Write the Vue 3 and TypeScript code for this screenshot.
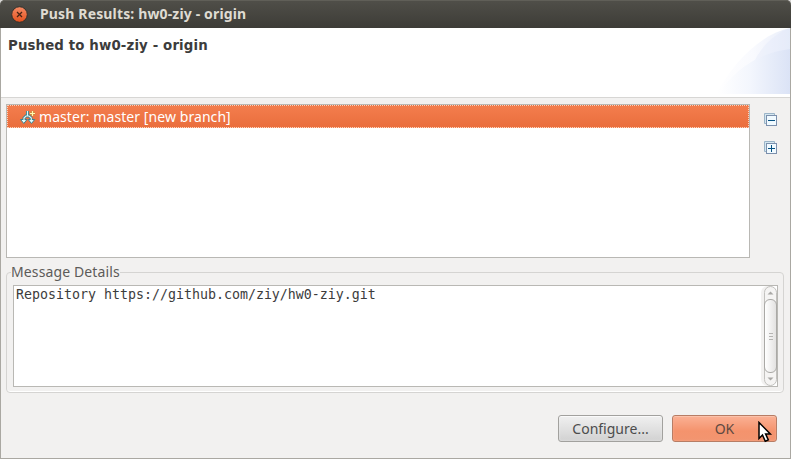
<script setup lang="ts">
import { ref } from 'vue'

interface PushRef {
  label: string
}

const project = 'hw0-ziy - origin'
const refs: PushRef[] = [{ label: 'master: master [new branch]' }]
const selected = ref(0)
const message = 'Repository https://github.com/ziy/hw0-ziy.git'
const toggles = ['collapse', 'expand']
</script>

<template>
  <div class="window">
    <header class="titlebar">
      <svg class="close" width="17" height="17" viewBox="0 0 17 17">
        <defs>
          <linearGradient id="closeFill" x1="0" y1="0" x2="0" y2="1">
            <stop offset="0" stop-color="#f58b65" />
            <stop offset="1" stop-color="#e4511d" />
          </linearGradient>
        </defs>
        <circle cx="8.5" cy="8.5" r="7.8" fill="url(#closeFill)" stroke="#32312c" />
        <path d="M6 6l5 5M11 6l-5 5" stroke="#492414" stroke-width="1.3" />
      </svg>
      <span class="title">Push Results: {{ project }}</span>
    </header>

    <div class="body">
      <section class="banner">
        <h1>Pushed to {{ project }}</h1>
        <svg class="swoosh" width="74" height="66" viewBox="0 0 74 66">
          <defs>
            <linearGradient id="outer" x1="0" y1="0" x2="1" y2="0">
              <stop offset="0" stop-color="#fff" />
              <stop offset="0.5" stop-color="#f9fafe" />
              <stop offset="1" stop-color="#e9eefa" />
            </linearGradient>
            <linearGradient id="inner" x1="0" y1="0" x2="1" y2="0">
              <stop offset="0" stop-color="#fff" />
              <stop offset="0.45" stop-color="#f3f6fd" />
              <stop offset="1" stop-color="#dbe3f6" />
            </linearGradient>
          </defs>
          <path d="M0 66C16 37 42 7 74 0V66Z" fill="url(#outer)" />
          <path d="M36 38C44 20 56 7 74 0V66H36Z" fill="#dde6f7" opacity=".3" />
          <path d="M2 66C20 40 43 25 74 21V66Z" fill="url(#inner)" />
        </svg>
      </section>

      <section class="results">
        <div class="list">
          <div v-for="(r, i) in refs" :key="r.label" class="row" :class="{ active: i === selected }" @click="selected = i">
            <svg class="branch" width="16" height="16" viewBox="0 0 16 16" fill="none">
              <path d="M7.5 1v5.500M4 10V8L6 6H9L11 8V10" stroke="#397f8e" stroke-width="3" />
              <path d="M.5 9.500H7L3.800 13.500ZM8.200 9.500H14.700L11.500 13.500Z" fill="#e5ffff" stroke="#397f8e" />
              <path d="M7.500 1v5.500M4 11V8L6 6H9L11.300 8V11" stroke="#dff8f6" stroke-width="1.200" />
              <path d="M12.500 1v5M10 3.500h5" stroke="#c08b35" stroke-width="2" />
              <path d="M12.500 1v5M10 3.500h5" stroke="#fff8b0" stroke-width="1.200" />
            </svg>
            <span class="row-label">{{ r.label }}</span>
          </div>
        </div>
        <div class="tools">
          <svg v-for="t in toggles" :key="t" width="13" height="13" viewBox="0 0 13 13">
            <path d="M.5 10.500V.5H10.500V3H3V10.500Z" fill="#d5e7ef" stroke="#9bb4c8" />
            <rect x="2.500" y="2.500" width="10" height="10" fill="#f1faff" stroke="#7c90ad" />
            <path d="M4 7.500h7" stroke="#075283" />
            <path v-if="t === 'expand'" d="M7.500 4v7" stroke="#075283" />
          </svg>
        </div>
      </section>

      <fieldset class="details">
        <legend><span>Message Details</span></legend>
        <div class="message">
          <pre>{{ message }}</pre>
          <div class="scrollbar">
            <div class="arrow"><svg width="7" height="4" viewBox="0 0 7 4"><path d="M.5 3.500L3.500 .5L6.500 3.500Z" fill="#a9a8a6" /></svg></div>
            <div class="thumb"><i></i><i></i><i></i></div>
            <div class="arrow"><svg width="7" height="4" viewBox="0 0 7 4"><path d="M.5 .5L3.500 3.500L6.500 .5Z" fill="#a9a8a6" /></svg></div>
          </div>
        </div>
      </fieldset>

      <footer class="actions">
        <button type="button"><span>Configure...</span></button>
        <button type="button" class="primary"><span>OK</span></button>
      </footer>
    </div>

    <svg class="cursor" width="16" height="22" viewBox="0 0 16 22">
      <path d="M2 1.500V17.500L5.500 14L8.300 20.200L11.300 18.900L8.600 12.900H13.300Z" fill="#fff" stroke="#000" stroke-width="1.500" />
    </svg>
  </div>
</template>

<style>
body {
  background: #d8d7d5;
  overflow: hidden;
}
</style>

<style scoped>
.window {
  position: relative;
  width: 791px;
  height: 459px;
  font-family: "Noto Sans", sans-serif;
  font-size: 14px;
  color: #4c4c4c;
}
.window * { box-sizing: border-box; }
.titlebar {
  display: flex;
  align-items: center;
  height: 28px;
  padding-left: 11px;
  gap: 12px;
  border-radius: 5px 5px 0 0;
  background: linear-gradient(#504f49, #3d3c37);
  box-shadow: inset 0 1px #605f58;
}
.close { flex: none; }
.title {
  color: #dfdbd2;
  font: bold 14px/20px "Noto Sans", sans-serif;
  letter-spacing: 0.15px;
  white-space: nowrap;
}
.body {
  height: 431px;
  display: flex;
  flex-direction: column;
  background: #f2f1f0;
  border: solid #aaa8a2;
  border-width: 0 1px 1px;
}
.banner {
  display: flex;
  justify-content: space-between;
  height: 70px;
  flex: none;
  background: #fff;
  border-bottom: 1px solid #d7d6d4;
}
.banner h1 {
  margin: 8px 0 0 7px;
  font: bold 13.33px/20px "DejaVu Sans", sans-serif;
  letter-spacing: 0.13px;
  color: #3c3c3c;
  white-space: nowrap;
}
.swoosh { flex: none; }
.results {
  display: flex;
  flex: none;
  margin: 6px 0 0 5px;
}
.list {
  width: 744px;
  height: 154px;
  background: #fff;
  border: 1px solid #b9b8b4;
}
.row {
  display: flex;
  align-items: center;
  height: 23px;
  padding-left: 12px;
  gap: 3px;
}
.branch { flex: none; margin-top: 2px; }
.row.active {
  background: linear-gradient(#f37d4d, #ea6e3d);
  color: #fff;
  border: 1px dotted #fad3be;
}
.row-label {
  line-height: 20px;
  letter-spacing: 0.07px;
  white-space: nowrap;
}
.tools {
  display: flex;
  flex-direction: column;
  gap: 15px;
  padding: 9px 0 0 14px;
}
.details {
  flex: none;
  width: 778px;
  height: 130px;
  min-width: 0;
  margin: 5px 0 0 5px;
  padding: 3px 5px 5px 6px;
  border: 1px solid #d5d4d2;
  border-radius: 4px;
  box-shadow: inset 0 -1px #fff;
}
.details legend {
  height: 19px;
  padding: 0;
  margin-left: -2px;
  line-height: 18px;
  letter-spacing: 0.12px;
  color: #5c5b59;
  white-space: nowrap;
}
.message {
  display: flex;
  justify-content: space-between;
  height: 102px;
  background: #fff;
  border: 1px solid #b9b8b4;
}
pre {
  margin: 0 0 0 2px;
  font: 13.29px/17px "DejaVu Sans Mono", monospace;
  color: #3c3c3c;
}
.scrollbar {
  display: flex;
  flex-direction: column;
  width: 13px;
  border: 1px solid #c2c1be;
  border-radius: 7px;
  background: #f5f4f3;
  box-shadow: -3px 0 #f2f1f0;
}
.arrow {
  height: 12px;
  display: flex;
  align-items: center;
  justify-content: center;
}
.thumb {
  flex: 1;
  display: flex;
  flex-direction: column;
  align-items: center;
  justify-content: center;
  gap: 2px;
  margin: 0 -1px;
  border: 1px solid #aaa9a6;
  border-radius: 6px;
  background: linear-gradient(90deg, #fff, #e3e2e1);
}
.thumb i { width: 4px; height: 1px; background: #b5b4b2; }
.actions {
  display: flex;
  justify-content: flex-end;
  gap: 9px;
  margin: 22px 13px 0 0;
}
button {
  width: 105px;
  height: 27px;
  padding: 1px 0 0;
  border: 1px solid #a2a19e;
  border-radius: 3px;
  background: linear-gradient(#f0f0f0, #dedede 60%, #d1d1d1);
  box-shadow: inset 0 1px #fafafa, inset 0 0 2px #eee;
  font: 14px/20px "Noto Sans", sans-serif;
  color: #4c4c4c;
}
.primary {
  border-color: #b77d65;
  background: linear-gradient(#fbb195, #f4936d 60%, #f29570);
  box-shadow: inset 0 1px #fcc2aa, inset 0 0 2px #f9b093;
}
.primary span { color: #5e4a42; }
.cursor {
  position: absolute;
  left: 757px;
  top: 421px;
}
</style>
